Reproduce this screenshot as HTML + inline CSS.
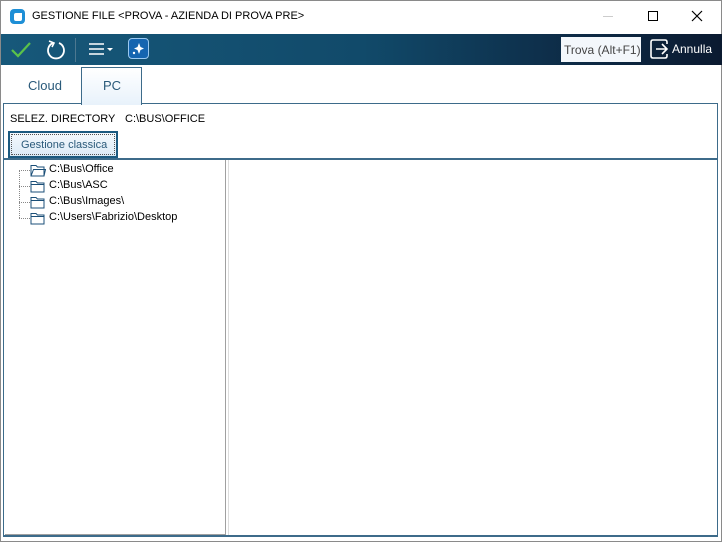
<!DOCTYPE html>
<html><head><style>
*{margin:0;padding:0;box-sizing:border-box}
body{width:722px;height:542px;background:#fff;font-family:"Liberation Sans",sans-serif;position:relative;overflow:hidden;border:1px solid #8a8a8a}
.abs{position:absolute}
.t{font-size:12px;color:#000;white-space:nowrap}
</style></head><body>
<div class="abs" style="left:9px;top:8px;width:15px;height:15px;background:#1e8fd6;border-radius:4px"></div>
<div class="abs" style="left:13px;top:12px;width:8px;height:8px;background:#fff;border-radius:2px 0 2px 2px"></div>
<div class="abs t" style="left:31px;top:9px;font-size:11px">GESTIONE FILE &lt;PROVA - AZIENDA DI PROVA PRE&gt;</div>
<div class="abs" style="left:602px;top:15px;width:10px;height:1px;background:#ccc"></div>
<div class="abs" style="left:647px;top:10px;width:10px;height:10px;border:1px solid #000"></div>
<svg class="abs" style="left:690px;top:9px" width="12" height="12"><path d="M1 1L11 11M11 1L1 11" stroke="#000" stroke-width="1.2"/></svg>
<div class="abs" style="left:0;top:33px;width:722px;height:31px;background:linear-gradient(90deg,#17587a 0%,#114a6a 50%,#0d2a45 80%,#0b1a30 100%)"></div>
<svg class="abs" style="left:9px;top:38px" width="22" height="20"><path d="M2 11L8 17L20 4" stroke="#5bc24a" stroke-width="2.2" fill="none"/></svg>
<svg class="abs" style="left:44px;top:37px" width="22" height="22"><path d="M8 5A8 8 0 1 0 14 5" stroke="#fff" stroke-width="1.8" fill="none"/><path d="M4 3L9 5L7 9" stroke="#fff" stroke-width="1.6" fill="none"/></svg>
<div class="abs" style="left:74px;top:37px;width:1px;height:24px;background:#4d7890"></div>
<svg class="abs" style="left:87px;top:40px" width="28" height="16"><path d="M1 3H16M1 8H16M1 13H16" stroke="#fff" stroke-width="1.6"/><path d="M19 7L25 7L22 10Z" fill="#fff"/></svg>
<div class="abs" style="left:127px;top:37px;width:21px;height:21px;background:#1565b0;border:1.5px solid #9ac8f0;border-radius:4px"></div>
<svg class="abs" style="left:129px;top:39px" width="17" height="17"><path d="M9 3L10.5 7L14 8.5L10.5 10L9 14L7.5 10L4 8.5L7.5 7Z" fill="#fff"/><circle cx="4" cy="13" r="1.2" fill="#fff"/></svg>
<div class="abs" style="left:560px;top:36px;width:80px;height:25px;background:#f3f7fb"></div>
<div class="abs t" style="left:563px;top:42px;color:#444">Trova (Alt+F1)</div>
<svg class="abs" style="left:648px;top:37px" width="22" height="22"><path d="M9 2H4Q2 2 2 4V18Q2 20 4 20H9" stroke="#fff" stroke-width="1.6" fill="none"/><path d="M7 11H18M13 6L18 11L13 16" stroke="#fff" stroke-width="1.6" fill="none"/><path d="M9 2H16Q18 2 18 4V6M18 16V18Q18 20 16 20H9" stroke="#fff" stroke-width="1.6" fill="none"/></svg>
<div class="abs t" style="left:671px;top:41px;color:#fff">Annulla</div>
<div class="abs t" style="left:27px;top:77px;color:#2a5a7a;font-size:13px">Cloud</div>
<div class="abs" style="left:80px;top:66px;width:61px;height:38px;border:1px solid #3d6b8a;border-bottom:none;background:linear-gradient(#fff,#e8f2fb);z-index:2"></div>
<div class="abs t" style="left:102px;top:77px;color:#2a5a7a;font-size:13px;z-index:3">PC</div>
<div class="abs" style="left:2px;top:102px;width:715px;height:434px;border:1px solid #3d6b8a;border-bottom:2px solid #3d6b8a"></div>
<div class="abs t" style="left:9px;top:112px;font-size:11px">SELEZ. DIRECTORY</div>
<div class="abs t" style="left:124px;top:112px;font-size:11px">C:\BUS\OFFICE</div>
<div class="abs" style="left:7px;top:130px;width:110px;height:27px;border:2px solid #1b5a80;background:linear-gradient(#f4f9fd,#dcebf7)"></div>
<div class="abs" style="left:10px;top:133px;width:104px;height:21px;border:1px dotted #555"></div>
<div class="abs t" style="left:20px;top:138px;font-size:11px;color:#2a5a7a">Gestione classica</div>
<div class="abs" style="left:3px;top:157px;width:713px;height:2px;background:#3d6b8a"></div>
<div class="abs" style="left:4px;top:159px;width:221px;height:375px;border:1px solid #a0a0a0;border-left:none;border-top:none"></div>
<div class="abs" style="left:227px;top:159px;width:1px;height:375px;background:#ddd"></div>
<div class="abs" style="left:18px;top:169px;width:1px;height:48px;border-left:1px dotted #888"></div>
<div class="abs" style="left:18px;top:169px;width:11px;border-top:1px dotted #888"></div>
<div class="abs" style="left:18px;top:185px;width:11px;border-top:1px dotted #888"></div>
<div class="abs" style="left:18px;top:201px;width:11px;border-top:1px dotted #888"></div>
<div class="abs" style="left:18px;top:217px;width:11px;border-top:1px dotted #888"></div>
<svg class="abs" style="left:29px;top:162px" width="16" height="64">
<path d="M1 2.5H6L7.5 4H14V13H1Z" fill="none" stroke="#1b4f78" stroke-width="1"/><path d="M1 13L3.5 6.5H15.5L14 13" fill="none" stroke="#1b4f78"/>
<g fill="none" stroke="#1b4f78"><path d="M1 18.5H6L7.5 20H14V29H1Z M1 21.5H14"/><path d="M1 34.5H6L7.5 36H14V45H1Z M1 37.5H14"/><path d="M1 50.5H6L7.5 52H14V61H1Z M1 53.5H14"/></g></svg>
<div class="abs t" style="left:48px;top:162px;font-size:11px">C:\Bus\Office</div>
<div class="abs t" style="left:48px;top:178px;font-size:11px">C:\Bus\ASC</div>
<div class="abs t" style="left:48px;top:194px;font-size:11px">C:\Bus\Images\</div>
<div class="abs t" style="left:48px;top:210px;font-size:11px">C:\Users\Fabrizio\Desktop</div>
</body></html>
